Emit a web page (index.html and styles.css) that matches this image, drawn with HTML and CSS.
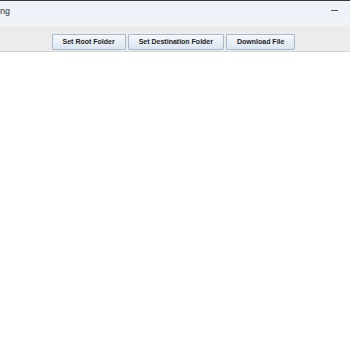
FILE: index.html
```html
<!DOCTYPE html>
<html lang="en">
<head>
  <meta charset="UTF-8">
  <title>downloader</title>
  <link rel="stylesheet" href="styles.css">
</head>
<body>

  <div class="titlebar">
    <span class="title">ng</span>
    <span class="minimize"></span>
  </div>

  <div class="menu-band"></div>

  <!-- toolbar with the three actions -->
  <div class="toolbar">
    <button class="tool-btn">Set Root Folder</button>
    <button class="tool-btn">Set Destination Folder</button>
    <button class="tool-btn">Download File</button>
  </div>

  <div class="content"></div>

</body>
</html>
```

FILE: styles.css
```css
body {
  margin: 0;
  font-family: "Liberation Sans", Arial, sans-serif;
  background-color: #fff;
}

.titlebar {
  height: 20px;
  border-top: 1px solid #3a3a3a;
  background-color: #eef2f9;
  display: flex;
  align-items: center;
  justify-content: space-between;
  padding: 0 12px 0 0;
}

.title {
  font-size: 9px;
  color: #333;
}

.minimize {
  width: 7px;
  height: 1px;
  background-color: #555;
  margin-bottom: 2px;
}

.menu-band {
  height: 10px;
  background: linear-gradient(#f6f6f6, #e6e6e6);
}

.toolbar {
  height: 20px;
  background-color: #ececec;
  border-bottom: 1px solid #d4d4d4;
  display: flex;
  justify-content: center;
  align-items: center;
  gap: 2px;
  padding: 0 3px 0 0;
}

.tool-btn {
  height: 16px;
  padding: 0 10px;
  margin-top: 1px;
  font-family: "Liberation Sans", Arial, sans-serif;
  font-size: 7px;
  font-weight: bold;
  color: #1e1e1e;
  background: linear-gradient(#f5f8fc, #dbe5f0);
  border: 1px solid #a8bacc;
  border-radius: 1px;
}

.content {
  height: 298px;
}
```
